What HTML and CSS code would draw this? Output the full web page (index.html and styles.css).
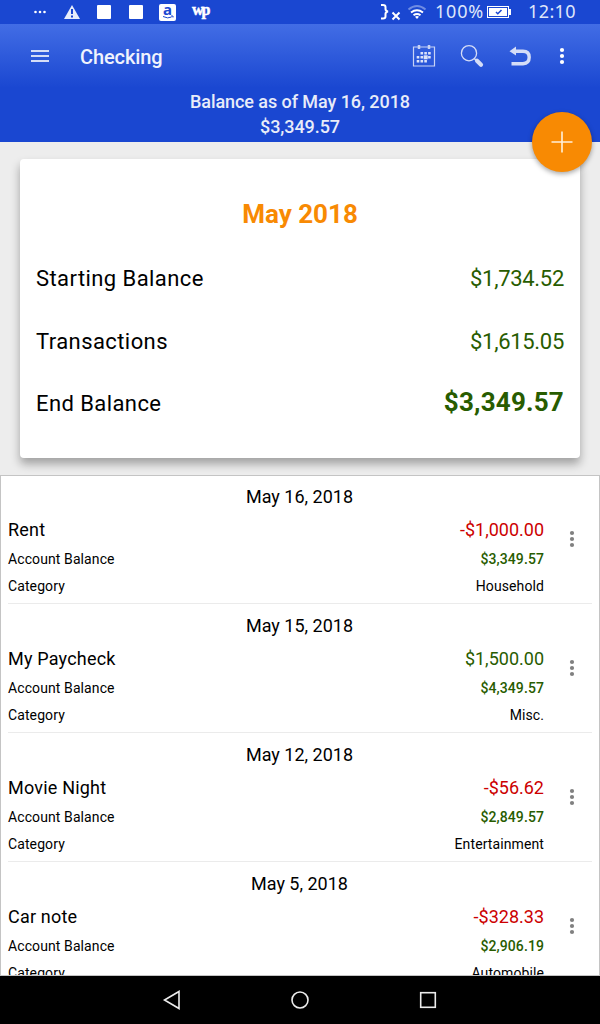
FILE: index.html
```
<!DOCTYPE html>
<html lang="en">
<head>
    <meta charset="UTF-8">
    <meta name="viewport" content="width=device-width, initial-scale=1.0">
    <title>Checking</title>
    <link rel="stylesheet" href="styles.css">
</head>
<body>
    <!-- Device status bar -->
    <div class="status-bar">
        <div class="status-left">
            <svg width="16" height="24" viewBox="0 0 16 24" fill="#fff"><circle cx="3.500" cy="12" r="1.300"/><circle cx="8" cy="12" r="1.300"/><circle cx="12.500" cy="12" r="1.300"/></svg>
            <svg width="16" height="24" viewBox="0 0 16 24"><path d="M8 5L16 19H0z" fill="#e8edfb"/><path d="M7 9h2v5H7zM7 15.500h2v2H7z" fill="#1a47d1"/></svg>
            <svg width="16" height="24" viewBox="0 0 16 24" fill="#fff"><rect x="1" y="5" width="14" height="14" rx="1"/></svg>
            <svg width="16" height="24" viewBox="0 0 16 24" fill="#fff"><rect x="1" y="5" width="14" height="14" rx="1"/></svg>
            <svg class="store-icon" width="17" height="24" viewBox="0 0 17 24"><rect y="4" width="17" height="17" rx="2" fill="#fff"/><text class="store-letter" x="8.500" y="15" text-anchor="middle">a</text><path d="M4 16.500q5 2.500 8.500 0.500M12 16h2v1.500" fill="none" stroke="#1a47d1"/></svg>
            <span class="news-logo">wp</span>
        </div>
        <div class="status-right">
            <svg width="21" height="24" viewBox="0 0 21 24" fill="none" stroke="#fff" stroke-width="2"><path d="M1 5h2q2.500 0 2.500 2v2q0 2 2.500 2.500q-2.500 0.500-2.500 2.500v2.500q0 2-2.500 2H1"/><path d="M12.500 12.500l7 7M19.500 12.500l-7 7"/></svg>
            <svg class="wifi" width="20" height="24" viewBox="0 0 20 24" fill="none" stroke="#fff" stroke-width="2"><path d="M1.500 9.500q8.500-7 17 0" stroke="#6f8ce3"/><path d="M4 12.500q6-4.500 12 0M6.500 15.200q3.500-2.500 7 0"/><path d="M10 19l-2-2.200q2-1.500 4 0z" fill="#fff" stroke="none"/></svg>
            <span class="battery-text">100%</span>
            <svg class="battery" width="25" height="24" viewBox="0 0 25 24"><path d="M0 6h22v3h2v6h-2v3H0z" fill="#fff"/><path d="M1 7h20v10H1z" fill="#1a47d1"/><path d="M2 8h18v8H2z" fill="#fff"/><path d="M9 12l1.800 1.800L14.500 10" fill="none" stroke="#1a47d1" stroke-width="1.500"/></svg>
            <span class="clock">12:10</span>
        </div>
    </div>

    <header class="header">
        <div class="toolbar">
            <svg class="menu-btn" width="20" height="20" viewBox="0 0 20 20" fill="#d5ddf7"><path d="M1 4h18v2H1zM1 9h18v2H1zM1 14h18v2H1z"/></svg>
            <h1>Checking</h1>
            <div class="actions">
                <svg width="24" height="24" viewBox="0 0 24 24"><path d="M1.500 3h21v19h-21z" fill="none" stroke="#c8d3f5" stroke-width="1.200"/><path d="M7 1v4M17 1v4" stroke="#c8d3f5" stroke-width="2.500"/><path d="M8.500 8h2.600v2.600H8.500zM12.300 8h2.600v2.600h-2.600zM16.100 8h2.600v2.600h-2.600zM4.700 12h2.600v2.600H4.700zM8.500 12h2.600v2.600H8.500zM16.100 12h2.600v2.600h-2.600zM4.700 16h2.600v2.600H4.700zM8.500 16h2.600v2.600H8.500zM12.300 16h2.600v2.600h-2.600z" fill="#dce3f9"/><path d="M11.700 11.300h4v4h-4z" fill="#dce3f9"/></svg>
                <svg width="24" height="24" viewBox="0 0 24 24"><circle cx="9" cy="9.200" r="7.600" fill="none" stroke="#d5ddf7" stroke-width="1.300"/><path d="M14.300 14.500l2 2" stroke="#d5ddf7" stroke-width="1.500"/><path d="M17 16.700l4 4" stroke="#d5ddf7" stroke-width="4.200" stroke-linecap="round"/></svg>
                <svg width="24" height="24" viewBox="0 0 24 24"><path d="M6 7.200h9q6.200 0 6.200 6t-6.200 6.500H3.500" fill="none" stroke="#d5ddf7" stroke-width="3.400"/><path d="M1.500 7.200L8 2.500v9z" fill="#d5ddf7"/></svg>
                <svg class="more-btn" width="6" height="24" viewBox="0 0 6 24" fill="#fff"><circle cx="3" cy="6" r="2.100"/><circle cx="3" cy="12" r="2.100"/><circle cx="3" cy="18" r="2.100"/></svg>
            </div>
        </div>
        <div class="balance">
            <div>Balance as of May 16, 2018</div>
            <div>$3,349.57</div>
        </div>
        <button class="add-btn" aria-label="Add transaction">
            <svg width="22" height="22" viewBox="0 0 22 22" stroke="#fff0da" stroke-width="1.600"><path d="M11 0.500v21M0.500 11h21"/></svg>
        </button>
    </header>

    <section class="summary">
        <h2>May 2018</h2>
        <div class="summary-row"><span class="label">Starting Balance</span><span class="value positive">$1,734.52</span></div>
        <div class="summary-row"><span class="label">Transactions</span><span class="value positive">$1,615.05</span></div>
        <div class="summary-row"><span class="label">End Balance</span><span class="total positive">$3,349.57</span></div>
    </section>

    <main class="transactions" id="transactions">
        <!-- Transactions will be displayed here -->
    </main>

    <!-- Device navigation bar -->
    <nav class="nav-bar">
        <svg width="20" height="20" viewBox="0 0 20 20"><path d="M17 1.500v17L2.500 10z"/></svg>
        <svg width="20" height="20" viewBox="0 0 20 20"><circle cx="10" cy="10" r="8"/></svg>
        <svg width="20" height="20" viewBox="0 0 20 20"><rect x="2.700" y="2.700" width="14.600" height="14.600"/></svg>
    </nav>

    <script>
        const transactions = [
            { date: "May 16, 2018", name: "Rent", amount: "-$1,000.00", balance: "$3,349.57", category: "Household" },
            { date: "May 15, 2018", name: "My Paycheck", amount: "$1,500.00", balance: "$4,349.57", category: "Misc." },
            { date: "May 12, 2018", name: "Movie Night", amount: "-$56.62", balance: "$2,849.57", category: "Entertainment" },
            { date: "May 5, 2018", name: "Car note", amount: "-$328.33", balance: "$2,906.19", category: "Automobile" }
        ];

        document.getElementById("transactions").innerHTML = transactions
            .map(
                (t) => `
                <article class="transaction">
                    <div class="date">${t.date}</div>
                    <div class="entry">
                        <div class="details">
                            <div class="row main-row"><span class="name">${t.name}</span><span class="${t.amount.startsWith("-") ? "negative" : "positive"}">${t.amount}</span></div>
                            <div class="row"><span>Account Balance</span><span class="positive account-balance">${t.balance}</span></div>
                            <div class="row"><span>Category</span><span>${t.category}</span></div>
                        </div>
                        <svg class="entry-menu" width="6" height="20" viewBox="0 0 6 20" fill="#808080"><circle cx="3" cy="4" r="2.100"/><circle cx="3" cy="10" r="2.100"/><circle cx="3" cy="16" r="2.100"/></svg>
                    </div>
                </article>
            `
            )
            .join("");
    </script>
</body>
</html>
```
FILE: styles.css
```
* {
    box-sizing: border-box;
}
body {
    margin: 0;
    height: 1024px;
    display: flex;
    flex-direction: column;
    overflow: hidden;
    background: #ededed;
    color: #000;
    font-family: Roboto, sans-serif;
}
svg {
    display: block;
    flex: none;
}
.status-bar {
    flex: none;
    height: 24px;
    padding: 0 24px 0 32px;
    display: flex;
    justify-content: space-between;
    background: #1a47d1;
    color: #dfe6fa;
    font-family: "Noto Sans", sans-serif;
    font-size: 18px;
    line-height: 23px;
}
.status-left {
    display: flex;
    gap: 16px;
}
.store-icon {
    margin-left: -1px;
}
.store-letter {
    font: bold 15px "Noto Sans", sans-serif;
    fill: #1a47d1;
}
.news-logo {
    color: #fff;
    font: bold 16px/20px "Liberation Serif", serif;
    letter-spacing: -2px;
    -webkit-text-stroke: 0.5px #fff;
}
.status-right {
    display: flex;
}
.wifi {
    margin: 0 8px 0 6px;
}
.battery-text {
    letter-spacing: 0.8px;
}
.battery {
    margin: 0 16px 0 3px;
}
.clock {
    letter-spacing: 0.4px;
}
.header {
    position: relative;
    flex: none;
    height: 118px;
    background: linear-gradient(#426de5, #1a47d1 64px);
}
.toolbar {
    height: 64px;
    padding: 0 35px 0 30px;
    display: flex;
    align-items: center;
}
.toolbar h1 {
    margin: 1px 0 0 30px;
    color: #f0f3fd;
    font-size: 20px;
    font-weight: 500;
    letter-spacing: -0.1px;
}
.actions {
    margin-left: auto;
    display: flex;
    gap: 24px;
}
.more-btn {
    margin-left: 3px;
}
.balance {
    padding-top: 1px;
    color: #e8ecf9;
    font-size: 18px;
    font-weight: 500;
    line-height: 25px;
    letter-spacing: -0.07px;
    text-align: center;
}
.add-btn {
    position: absolute;
    top: 88px;
    right: 8px;
    width: 60px;
    height: 60px;
    padding: 0;
    border: none;
    border-radius: 50%;
    background: #f88a03;
    box-shadow: 0 2px 5px rgba(0, 0, 0, 0.35);
    display: flex;
    align-items: center;
    justify-content: center;
    z-index: 1;
}
.summary {
    flex: none;
    height: 299px;
    margin: 17px 20px;
    padding: 32px 16px 0;
    border-radius: 4px;
    background: #fff;
    box-shadow: 0 6px 10px rgba(0, 0, 0, 0.32);
}
.summary h2 {
    margin: 0 0 17px;
    color: #f88a03;
    font-size: 26px;
    line-height: 46px;
    text-align: center;
}
.summary-row {
    height: 62.500px;
    display: flex;
    justify-content: space-between;
    font-size: 22px;
    line-height: 50px;
}
.label {
    letter-spacing: 0.42px;
}
.value {
    letter-spacing: -0.3px;
}
.total {
    margin-top: -2px;
    font-size: 26px;
    font-weight: bold;
    letter-spacing: 0.2px;
}
.positive {
    color: #285c00;
}
.negative {
    color: #cc0000;
}
.transactions {
    flex: 1;
    min-height: 0;
    overflow: hidden;
    border: 1px solid #c4c4c4;
    background: #fff;
}
.transaction {
    height: 128px;
    margin: 0 7px 1px;
    padding-top: 5px;
    border-bottom: 1px solid #ebebeb;
}
.date {
    padding-right: 1px;
    font-size: 18px;
    line-height: 32px;
    text-align: center;
}
.entry {
    display: flex;
}
.details {
    flex: 1;
}
.row {
    display: flex;
    justify-content: space-between;
    font-size: 14px;
    line-height: 27px;
    letter-spacing: 0.1px;
}
.main-row {
    font-size: 18px;
    line-height: 33px;
    letter-spacing: 0;
}
.name {
    letter-spacing: 0.2px;
}
.account-balance {
    font-weight: 500;
}
.entry-menu {
    margin: 16px 17px 0 25px;
}
.nav-bar {
    flex: none;
    height: 48px;
    display: flex;
    align-items: center;
    justify-content: center;
    gap: 108px;
    background: #000;
}
.nav-bar svg {
    fill: none;
    stroke: #ececec;
    stroke-width: 1.600;
}
```
